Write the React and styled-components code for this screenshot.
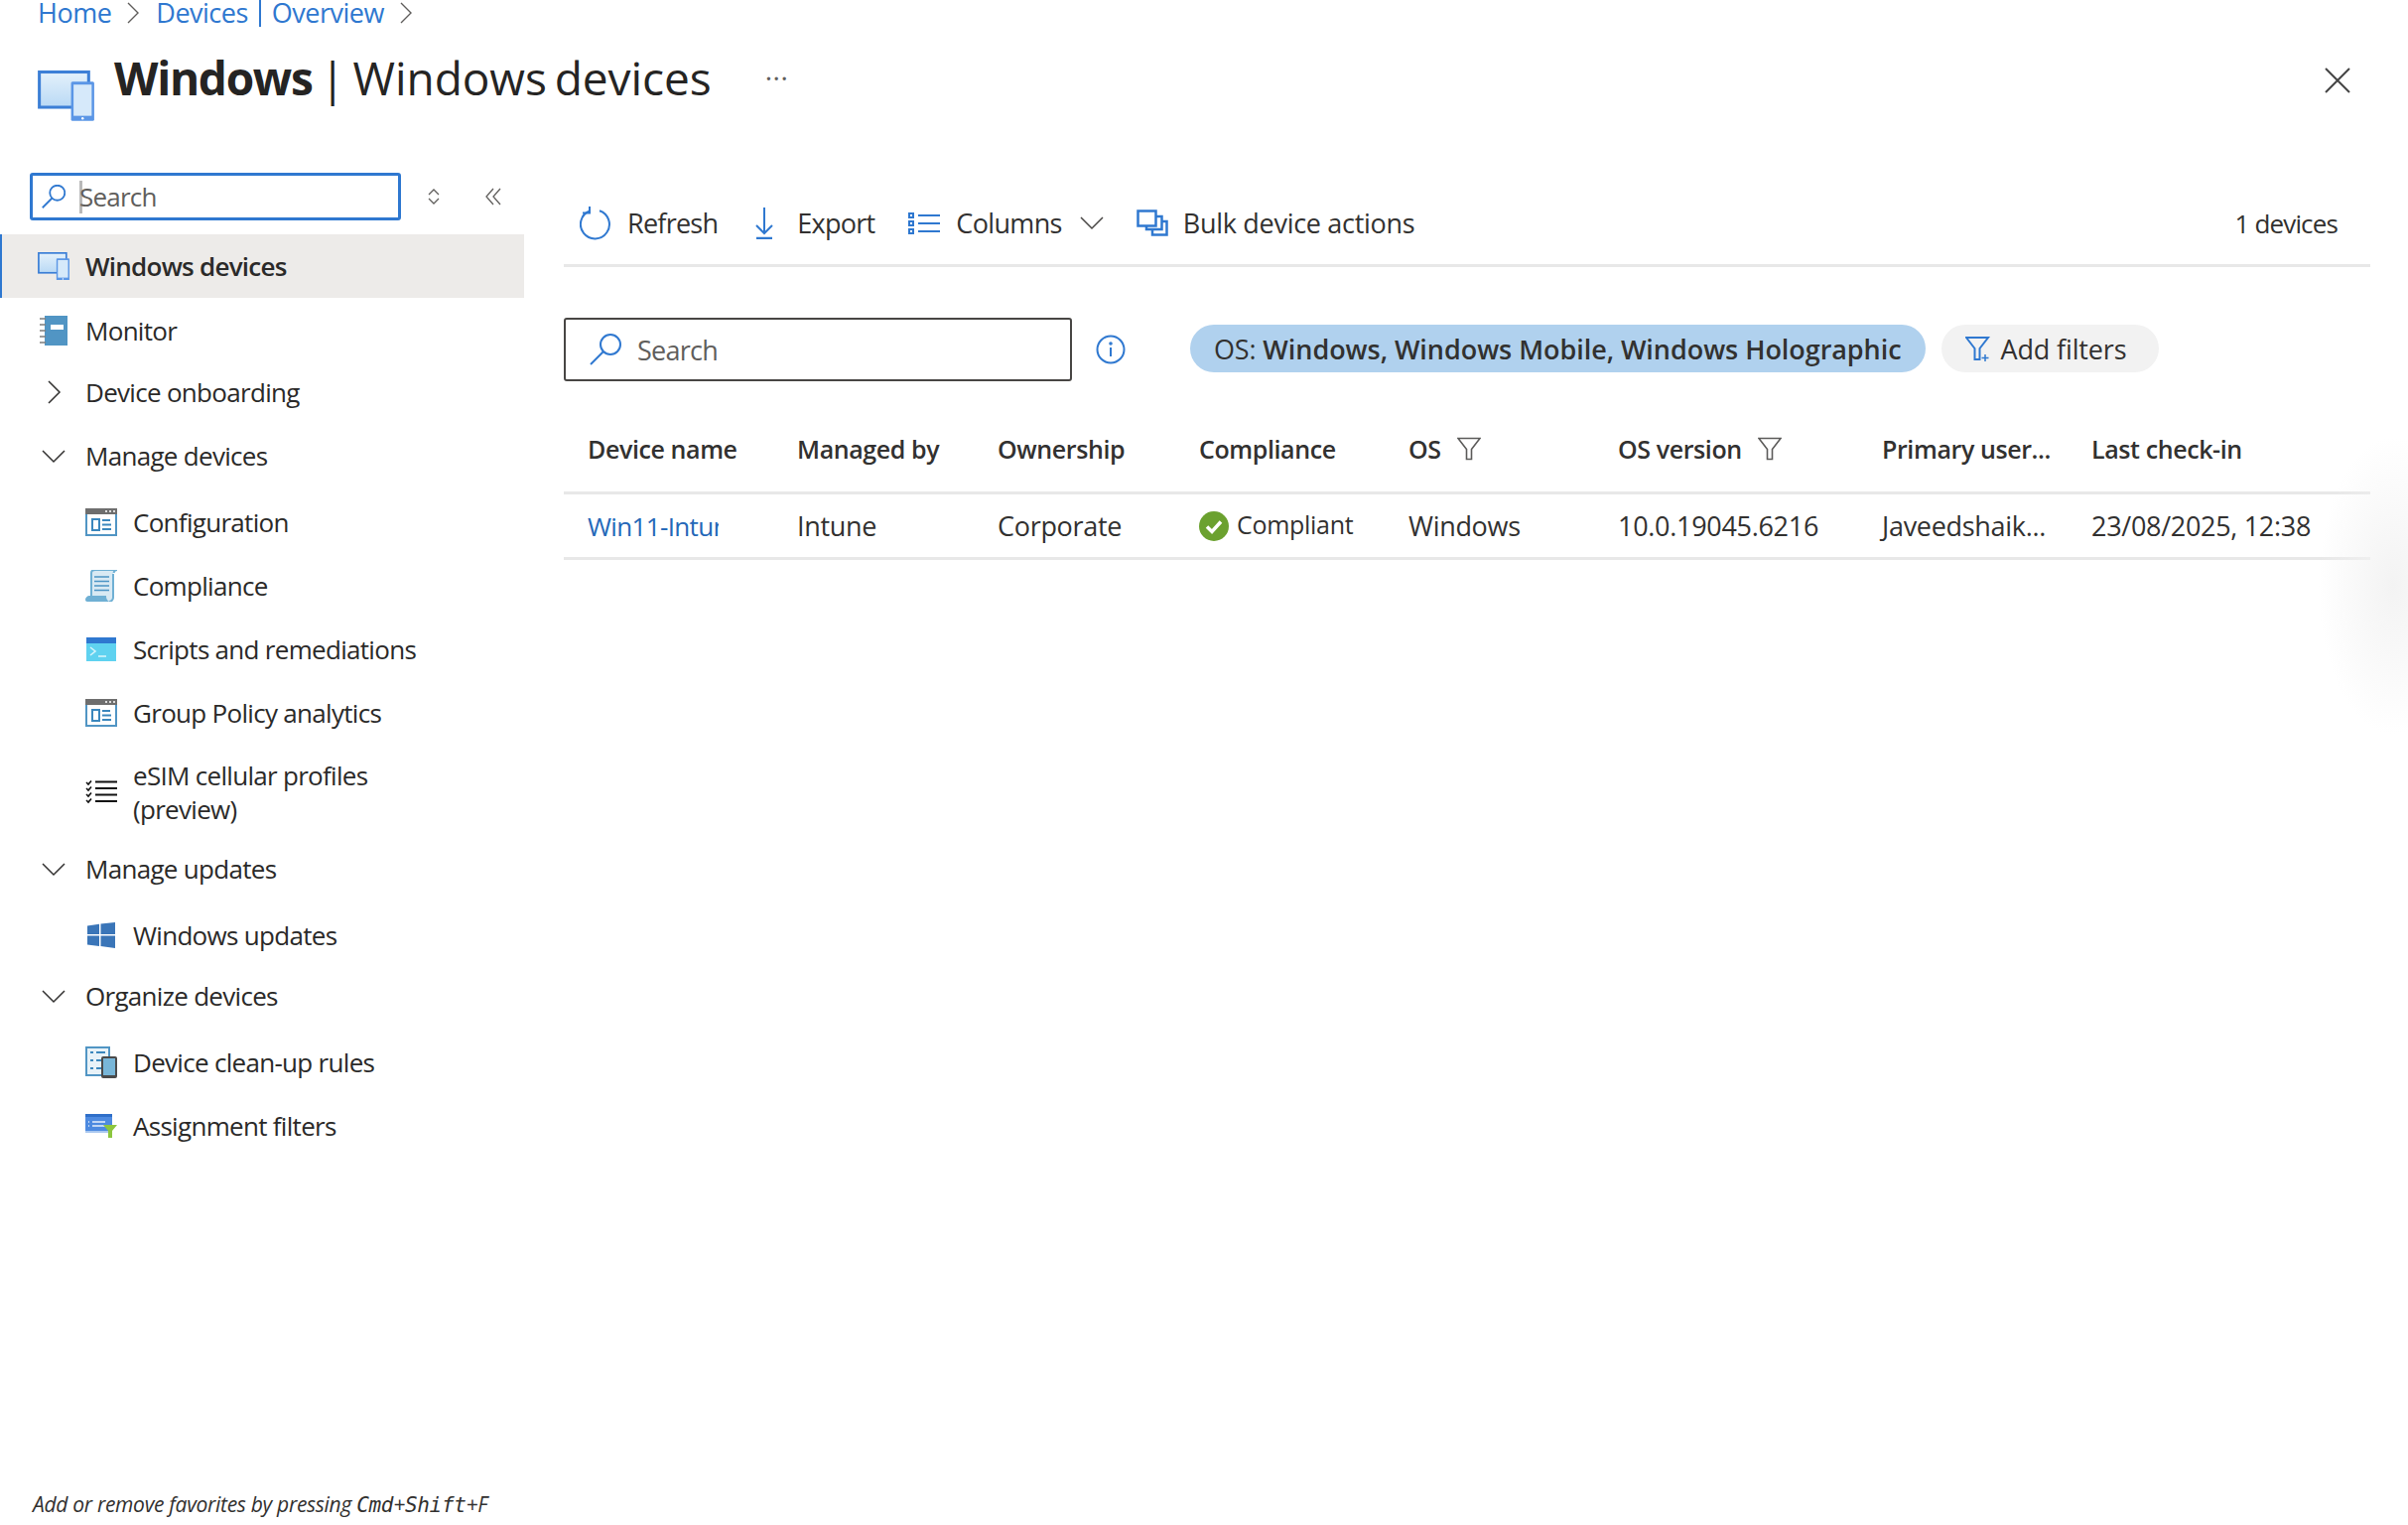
import React from "react";
import styled, { createGlobalStyle } from "styled-components";

const GlobalStyle = createGlobalStyle`
  html, body { margin: 0; padding: 0; background: #fff; }
  body { font-family: "Open Sans", "Noto Sans", sans-serif; color: #323130; }
  * { box-sizing: border-box; }
`;

const Page = styled.div`
  position: relative;
  width: 2426px;
  height: 1536px;
  overflow: hidden;
  background: #fff;
`;

const Glow = styled.div`
  position: absolute;
  right: -60px;
  top: 440px;
  width: 150px;
  height: 300px;
  background: radial-gradient(closest-side, #f3f3f3, #ffffff00);
`;

const Breadcrumb = styled.nav`
  display: flex;
  align-items: center;
  height: 26px;
  padding-left: 38px;
  font-size: 27px;
  letter-spacing: -0.5px;
  line-height: 24px;
  color: #2f78d0;
`;

const CrumbLink = styled.span`
  display: block;
`;

const CrumbBar = styled.span`
  width: 2px;
  height: 28px;
  margin: 0 11px;
  background: #2f78d0;
`;

const CrumbChevron = styled.svg`
  width: 14px;
  height: 24px;
  margin: 0 16px 0 15px;
  flex: none;
`;

const Header = styled.header`
  display: flex;
  align-items: flex-start;
  height: 148px;
  padding: 45px 58px 0 38px;
`;

const TitleText = styled.h1`
  margin: -23px 0 0 20px;
  font-size: 46px;
  font-weight: 400;
  line-height: 60px;
  letter-spacing: -0.05px;
  word-spacing: -4px;
  color: #252423;
  b { font-weight: 700; letter-spacing: -1.3px; }
`;

const More = styled.span`
  margin: -8px 0 0 54px;
  font-size: 28px;
  line-height: 30px;
  letter-spacing: 0.5px;
  color: #605e5c;
`;

const CloseButton = styled.button`
  margin-left: auto;
  padding: 0;
  margin-top: -3px;
  border: 0;
  background: none;
  width: 26px;
  height: 26px;
`;

const Body = styled.div`
  display: flex;
  align-items: flex-start;
`;

const Sidebar = styled.aside`
  width: 528px;
  flex: none;
  height: 1362px;
  display: flex;
  flex-direction: column;
`;

const SideTools = styled.div`
  display: flex;
  align-items: center;
  height: 48px;
  margin-bottom: 14px;
  padding-left: 30px;
`;

const SideSearch = styled.div`
  display: flex;
  align-items: center;
  width: 374px;
  height: 48px;
  padding-left: 9px;
  border: 3px solid #2f78d0;
  border-radius: 3px;
  font-size: 26px;
  letter-spacing: -0.8px;
  color: #605e5c;
`;

const Caret = styled.span`
  width: 3px;
  height: 33px;
  margin: 0 -3px 0 14px;
  background: #b9b9b9;
`;

const SideTool = styled.svg`
  flex: none;
  margin-left: ${(p) => p.$gap}px;
`;

const NavRow = styled.div`
  display: flex;
  align-items: center;
  height: ${(p) => p.$h || 64}px;
  margin-top: ${(p) => p.$mt || 0}px;
  padding-left: ${(p) => (p.$child ? 86 : 38)}px;
  font-size: 26px;
  line-height: 34px;
  letter-spacing: -0.7px;
  color: #2b2a29;
  ${(p) =>
    p.$active &&
    `
    background: #edebe9;
    border-left: 2px solid #2f78d0;
    padding-left: 36px;
    font-weight: 600;
    letter-spacing: -0.75px;
  `}
`;

const NavIcon = styled.span`
  display: flex;
  align-items: center;
  justify-content: center;
  width: 32px;
  margin-right: 16px;
  flex: none;
`;

const NavLabel = styled.span`
  max-width: 300px;
`;

const Hint = styled.div`
  margin-top: auto;
  padding: 0 0 7px 33px;
  font-size: 21px;
  font-style: italic;
  letter-spacing: -0.3px;
  color: #323130;
  code {
    font-family: "DejaVu Sans Mono", monospace;
    font-size: 21px;
    letter-spacing: -0.3px;
  }
`;

const Main = styled.main`
  margin-left: 40px;
  width: 1820px;
  flex: none;
`;

const Toolbar = styled.div`
  display: flex;
  align-items: center;
  height: 83px;
  margin-top: 12px;
  padding: 0 33px 0 16px;
  border-bottom: 3px solid #e8e8e8;
  gap: 38px;
`;

const ToolButton = styled.span`
  display: flex;
  align-items: center;
  gap: ${(p) => p.$gap || 16}px;
  height: 40px;
  font-size: 27px;
  letter-spacing: ${(p) => p.$ls ?? -0.75}px;
  color: #323130;
  margin-bottom: 3px;
  margin-right: ${(p) => p.$mr || 0}px;
`;

const Count = styled.span`
  margin-left: auto;
  margin-bottom: 2px;
  font-size: 26px;
  letter-spacing: -0.85px;
  color: #323130;
`;

const FilterBar = styled.div`
  display: flex;
  align-items: center;
  height: 64px;
  margin-top: 51px;
`;

const MainSearch = styled.div`
  display: flex;
  align-items: center;
  gap: 16px;
  width: 512px;
  height: 64px;
  padding-left: 24px;
  border: 2px solid #484644;
  border-radius: 3px;
  font-size: 27px;
  letter-spacing: -0.75px;
  color: #605e5c;
`;

const InfoIcon = styled.svg`
  margin: 0 65px 0 24px;
  flex: none;
`;

const Pill = styled.div`
  display: flex;
  align-items: center;
  height: 48px;
  padding: 0 ${(p) => (p.$muted ? 33 : 24)}px 0 24px;
  margin: 0 16px 2px 0;
  gap: 10px;
  border-radius: 24px;
  background: ${(p) => (p.$muted ? "#f2f2f2" : "#b0d1ee")};
  font-size: 27px;
  letter-spacing: -0.15px;
  color: #323130;
  b { font-weight: 600; letter-spacing: -0.05px; }
`;

const PillText = styled.span`
  white-space: pre;
`;

const Grid = styled.div`
  display: grid;
  grid-template-columns: 211px 202px 203px 211px 211px 266px 211px 1fr;
  align-items: center;
  height: ${(p) => p.$h}px;
  margin-top: ${(p) => p.$top || 0}px;
  border-bottom: 3px solid #e8e8e8;
`;

const HeadCell = styled.div`
  display: flex;
  align-items: center;
  gap: 16px;
  padding-left: 24px;
  font-size: 25px;
  font-weight: 600;
  letter-spacing: -0.4px;
  color: #323130;
  white-space: nowrap;
`;

const Cell = styled.div`
  display: flex;
  align-items: center;
  gap: 8px;
  padding-left: 24px;
  font-size: 27px;
  letter-spacing: -0.3px;
  color: #323130;
  white-space: nowrap;
`;

const DeviceLink = styled.span`
  display: block;
  width: 132px;
  overflow: hidden;
  font-size: 26px;
  font-weight: 500;
  letter-spacing: -0.65px;
  color: #2468b8;
`;

const StatusText = styled.span`
  font-size: 25px;
  letter-spacing: -0.3px;
  margin-top: -3px;
`;

const DevicesIcon = ({ w }) => (
  <svg width={w} height={w * 0.89} viewBox="0 0 56 50">
    <defs>
      <linearGradient id="scr" x1="0" y1="0" x2="0" y2="1">
        <stop offset="0" stopColor="#e4f1fb" />
        <stop offset="1" stopColor="#b9d9f5" />
      </linearGradient>
    </defs>
    <rect x="1.5" y="1.5" width="49" height="35" fill="url(#scr)" stroke="#3c7fd6" strokeWidth="3" />
    <rect x="33" y="11" width="23" height="39" rx="1.5" fill="#5b96e6" />
    <rect x="35.5" y="14" width="18" height="31" fill="#d6e9fa" />
    <circle cx="44.5" cy="47.5" r="1.2" fill="#fff" />
  </svg>
);

const MonitorIcon = () => (
  <svg width="28" height="30" viewBox="0 0 28 30">
    <rect x="5" y="0" width="23" height="30" fill="#5195c4" />
    <rect x="11" y="9" width="13" height="5" fill="#fff" />
    <path d="M0 3h6M0 9h6M0 15h6M0 21h6M0 27h6" stroke="#7c7c7c" strokeWidth="1.6" />
  </svg>
);

const ConfigIcon = () => (
  <svg width="32" height="28" viewBox="0 0 32 28">
    <rect x="1" y="1" width="30" height="26" fill="#fff" stroke="#5195c4" strokeWidth="2" />
    <rect x="0" y="0" width="32" height="6" fill="#6e6e6e" />
    <path d="M20 3h2M24 3h2M28 3h2" stroke="#fff" strokeWidth="1.6" />
    <rect x="7" y="11" width="7" height="11" fill="none" stroke="#3b87bd" strokeWidth="2" />
    <path d="M17 12h8M17 16.500h9M17 21h9" stroke="#3b87bd" strokeWidth="2" />
  </svg>
);

const ComplianceIcon = () => (
  <svg width="32" height="32" viewBox="0 0 32 32">
    <path d="M6 3c0-2 2-3 4-3h22c-3 0-4 2-4 4v24c0 2-2 4-4 4H2c-1 0-2-1-2-2 0-2 2-3 4-3h2z" fill="#d8e9f3" />
    <path d="M6 26V3c0-2 2-3 4-3h22c-2 0-3 1-3.500 3M28 4v24c0 2-2 4-4 4" fill="none" stroke="#6fb0d4" strokeWidth="2" />
    <path d="M0 30c0-2 2-4 4-4h17c0 2 0 4 3 6H2c-1 0-2-1-2-2z" fill="#6fb0d4" />
    <path d="M9 7h15M9 11.500h15M9 16h15M9 20.500h15" stroke="#4b94c4" strokeWidth="1.6" />
  </svg>
);

const ScriptsIcon = () => (
  <svg width="30" height="24" viewBox="0 0 30 24">
    <rect width="30" height="24" fill="#5fd2f0" />
    <rect width="30" height="6" fill="#2f78d0" />
    <path d="M4 10l5 4-5 4" fill="none" stroke="#d6f4fb" strokeWidth="1.600" />
    <path d="M12 19h8" stroke="#d6f4fb" strokeWidth="1.600" />
  </svg>
);

const ChecklistIcon = () => (
  <svg width="32" height="24" viewBox="0 0 32 24">
    <path d="M10 2.500h22M10 9h22M10 15.500h22M10 22h22" stroke="#111" strokeWidth="2" transform="translate(0 -1)" />
    <path d="M1 2l2 2 3-3.500M1 8l2 2 3-3.500M1 14l2 2 3-3.500M1 20l2 2 3-3.500" fill="none" stroke="#111" strokeWidth="1.600" />
  </svg>
);

const WindowsIcon = () => (
  <svg width="28" height="26" viewBox="0 0 28 26">
    <path d="M0 3.500l12-1.700V12H0zM13.500 1.600L28 0v12H13.500zM0 13.500h12v10.600L0 22.500zM13.500 13.500H28V26l-14.500-2z" fill="#3a75b8" />
  </svg>
);

const CleanupIcon = () => (
  <svg width="32" height="32" viewBox="0 0 32 32">
    <rect x="1" y="1" width="23" height="28" fill="#e8f2f8" stroke="#5195c4" strokeWidth="2" />
    <path d="M5 6h3M11 6h9M5 14h3M11 14h6M5 22h3M11 22h5" stroke="#3b87bd" strokeWidth="2" />
    <rect x="16" y="10" width="16" height="22" rx="2" fill="#4a4a4a" />
    <rect x="18" y="12" width="12" height="17" fill="#78b6d8" />
  </svg>
);

const AssignIcon = () => (
  <svg width="32" height="24" viewBox="0 0 32 24">
    <rect width="27" height="19" fill="#4d8ae0" />
    <rect y="17" width="27" height="2" fill="#a9c7ef" />
    <rect width="27" height="3" fill="#2f6fc9" />
    <path d="M3 8h1M3 12h1M7 8h13M7 12h17" stroke="#e6effa" strokeWidth="1.500" />
    <path d="M18 11h14l-5 6v7h-4v-7z" fill="#8cc63f" />
  </svg>
);

const Chevron = ({ open }) => (
  <svg width="24" height="24" viewBox="0 0 24 24" fill="none" stroke="#323130" strokeWidth="1.5">
    {open ? <path d="M1 7l11 11L23 7" /> : <path d="M7 1l11 11L7 23" />}
  </svg>
);

const SearchGlyph = ({ size = 24 }) => (
  <svg width={size} height={size} viewBox="0 0 32 32" fill="none" stroke="#2f78d0" strokeWidth={size > 28 ? 2 : 2.4}>
    <circle cx="21" cy="11" r="10" />
    <path d="M14 18L1 31" />
  </svg>
);

const FunnelIcon = () => (
  <svg width="24" height="24" viewBox="0 0 24 24" fill="none" stroke="#5c5b5a" strokeWidth="1.600">
    <path d="M1 1.500h22l-8.500 11v10h-5v-10z" />
  </svg>
);

const subItems1 = [
  ["Configuration", <ConfigIcon />, 64, 6],
  ["Compliance", <ComplianceIcon />, 64, 0],
  ["Scripts and remediations", <ScriptsIcon />, 64, 0],
  ["Group Policy analytics", <ConfigIcon />, 64, 0],
  ["eSIM cellular profiles (preview)", <ChecklistIcon />, 96, 0],
];

export default function App() {
  return (
    <Page>
      <GlobalStyle />
      <Glow />
      <Breadcrumb>
        <CrumbLink>Home</CrumbLink>
        <CrumbChevron viewBox="0 0 14 24" fill="none" stroke="#605e5c" strokeWidth="1.400">
          <path d="M2 2l10 10L2 22" />
        </CrumbChevron>
        <CrumbLink>Devices</CrumbLink>
        <CrumbBar />
        <CrumbLink>Overview</CrumbLink>
        <CrumbChevron viewBox="0 0 14 24" fill="none" stroke="#605e5c" strokeWidth="1.400">
          <path d="M2 2l10 10L2 22" />
        </CrumbChevron>
      </Breadcrumb>

      <Header>
        <DevicesIcon w={57} />
        <TitleText>
          <b>Windows</b> | Windows devices
        </TitleText>
        <More>···</More>
        <CloseButton aria-label="Close">
          <svg width="26" height="26" viewBox="0 0 26 26" stroke="#444" strokeWidth="2">
            <path d="M1 1l24 24M25 1L1 25" />
          </svg>
        </CloseButton>
      </Header>

      <Body>
        <Sidebar>
          <SideTools>
            <SideSearch>
              <SearchGlyph size={24} />
              <Caret />
              Search
            </SideSearch>
            <SideTool $gap={26} width="14" height="18" viewBox="0 0 14 18" fill="none" stroke="#605e5c" strokeWidth="1.300">
              <path d="M2 7l5-5 5 5M2 11l5 5 5-5" />
            </SideTool>
            <SideTool $gap={44} width="18" height="18" viewBox="0 0 18 18" fill="none" stroke="#605e5c" strokeWidth="1.300">
              <path d="M9 1L2 9l7 8M16 1L9 9l7 8" />
            </SideTool>
          </SideTools>

          <NavRow $active>
            <NavIcon><DevicesIcon w={32} /></NavIcon>
            Windows devices
          </NavRow>
          <NavRow $h={66}>
            <NavIcon><MonitorIcon /></NavIcon>
            Monitor
          </NavRow>
          <NavRow $h={58}>
            <NavIcon><Chevron /></NavIcon>
            Device onboarding
          </NavRow>
          <NavRow $h={58} $mt={6}>
            <NavIcon><Chevron open /></NavIcon>
            Manage devices
          </NavRow>
          {subItems1.map(([label, icon, h, mt]) => (
            <NavRow key={label} $h={h} $mt={mt} $child>
              <NavIcon>{icon}</NavIcon>
              <NavLabel>{label}</NavLabel>
            </NavRow>
          ))}
          <NavRow $h={58}>
            <NavIcon><Chevron open /></NavIcon>
            Manage updates
          </NavRow>
          <NavRow $mt={6} $child>
            <NavIcon><WindowsIcon /></NavIcon>
            Windows updates
          </NavRow>
          <NavRow $h={58}>
            <NavIcon><Chevron open /></NavIcon>
            Organize devices
          </NavRow>
          <NavRow $mt={6} $child>
            <NavIcon><CleanupIcon /></NavIcon>
            Device clean-up rules
          </NavRow>
          <NavRow $child>
            <NavIcon><AssignIcon /></NavIcon>
            Assignment filters
          </NavRow>

          <Hint>
            Add or remove favorites by pressing <code>Cmd</code>+<code>Shift</code>+F
          </Hint>
        </Sidebar>

        <Main>
          <Toolbar>
            <ToolButton>
              <svg width="32" height="34" viewBox="0 0 32 34" fill="none" stroke="#2f78d0" strokeWidth="2">
                <path d="M20 4.200A14.500 14.500 0 1 1 10 4.500" />
                <path d="M10 0l0 6.500h-7" />
              </svg>
              Refresh
            </ToolButton>
            <ToolButton $gap={24} $mr={-4}>
              <svg width="18" height="32" viewBox="0 0 18 32" fill="none" stroke="#2f78d0" strokeWidth="2">
                <path d="M9 0v26M1 18l8 8 8-8" />
                <path d="M1 31h16" strokeWidth="2.500" />
              </svg>
              Export
            </ToolButton>
            <ToolButton $mr={-5} $ls={-0.65}>
              <svg width="32" height="22" viewBox="0 0 32 22" fill="none" stroke="#2f78d0" strokeWidth="2">
                <path d="M10 3h22M10 11h22M10 19h22" />
                <rect x="1" y="1" width="4" height="4" />
                <rect x="1" y="9" width="4" height="4" />
                <rect x="1" y="17" width="4" height="4" />
              </svg>
              Columns
              <svg width="24" height="14" viewBox="0 0 24 14" fill="none" stroke="#484644" strokeWidth="1.500" style={{ marginLeft: 2 }}>
                <path d="M1 1l11 11L23 1" />
              </svg>
            </ToolButton>
            <ToolButton $gap={15} $ls={-0.3}>
              <svg width="32" height="27" viewBox="0 0 32 27" fill="none" stroke="#2f78d0" strokeWidth="2.500">
                <rect x="1.500" y="1.500" width="18" height="15" />
                <path d="M19 7h6.500v13H10v-4" />
                <path d="M25 12h5.500v13.500H16V20" />
              </svg>
              Bulk device actions
            </ToolButton>
            <Count>1 devices</Count>
          </Toolbar>

          <FilterBar>
            <MainSearch>
              <SearchGlyph size={32} />
              Search
            </MainSearch>
            <InfoIcon width="30" height="30" viewBox="0 0 30 30" fill="none" stroke="#2f78d0" strokeWidth="2">
              <circle cx="15" cy="15" r="13.500" />
              <path d="M15 13v9" />
              <circle cx="15" cy="9" r="0.800" fill="#2f78d0" />
            </InfoIcon>
            <Pill>
              <PillText>
                OS: <b>Windows, Windows Mobile, Windows Holographic</b>
              </PillText>
            </Pill>
            <Pill $muted>
              <svg width="26" height="26" viewBox="0 0 26 26" fill="none" stroke="#2f78d0" strokeWidth="2">
                <path d="M1 2h22l-8.500 11v11h-5V13z" />
                <path d="M20 19v7M16.500 22.500h7" strokeWidth="1.500" />
              </svg>
              Add filters
            </Pill>
          </FilterBar>

          <Grid $h={90} $top={24}>
            <HeadCell>Device name</HeadCell>
            <HeadCell>Managed by</HeadCell>
            <HeadCell>Ownership</HeadCell>
            <HeadCell>Compliance</HeadCell>
            <HeadCell>OS <FunnelIcon /></HeadCell>
            <HeadCell>OS version <FunnelIcon /></HeadCell>
            <HeadCell>Primary user...</HeadCell>
            <HeadCell>Last check-in</HeadCell>
          </Grid>
          <Grid $h={66}>
            <Cell><DeviceLink>Win11-Intune-01</DeviceLink></Cell>
            <Cell>Intune</Cell>
            <Cell>Corporate</Cell>
            <Cell>
              <svg width="30" height="30" viewBox="0 0 30 30">
                <circle cx="15" cy="15" r="15" fill="#6ba12f" />
                <path d="M8 15.500l5 5 9-10" fill="none" stroke="#fff" strokeWidth="3.500" />
              </svg>
              <StatusText>Compliant</StatusText>
            </Cell>
            <Cell>Windows</Cell>
            <Cell>10.0.19045.6216</Cell>
            <Cell>Javeedshaik...</Cell>
            <Cell>23/08/2025, 12:38</Cell>
          </Grid>
        </Main>
      </Body>
    </Page>
  );
}
